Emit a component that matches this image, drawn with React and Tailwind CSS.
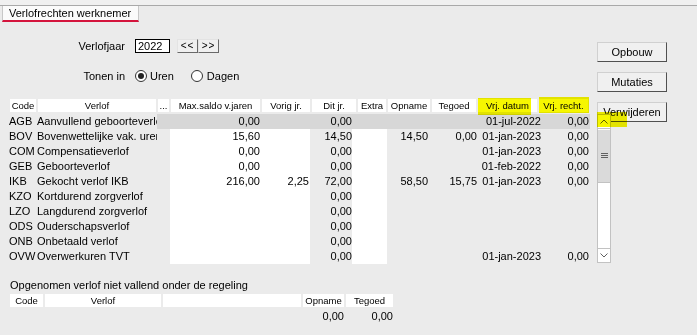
import React from 'react';

const HEAD = [
  { label: 'Code', w: 'w-[26px]' },
  { label: 'Verlof', w: 'w-[118px]' },
  { label: '...', w: 'w-[11px]' },
  { label: 'Max.saldo v.jaren', w: 'w-[89px]' },
  { label: 'Vorig jr.', w: 'w-[48px]' },
  { label: 'Dit jr.', w: 'w-[44px]' },
  { label: 'Extra', w: 'w-[28px]' },
  { label: 'Opname', w: 'w-[42px]' },
  { label: 'Tegoed', w: 'w-[44px]' },
  { label: 'Vrj. datum', w: 'w-[59px]' },
  { label: 'Vrj. recht.', w: 'w-[49px]' },
];

// breedte, uitlijning en achtergrond per datakolom
const COLS = [
  { w: 'w-[28px]', cls: 'text-left' },
  { w: 'w-[120px]', cls: 'text-left' },
  { w: 'w-[13px]', cls: '' },
  { w: 'w-[91px]', cls: 'text-right pr-px', white: true },
  { w: 'w-[49px]', cls: 'text-right pr-px', white: true },
  { w: 'w-[42px]', cls: 'text-right' },
  { w: 'w-[35px]', cls: 'text-right', white: true },
  { w: 'w-[42px]', cls: 'text-right pr-px' },
  { w: 'w-[49px]', cls: 'text-right pr-px' },
  { w: 'w-[64px]', cls: 'text-right pr-px' },
  { w: 'w-[48px]', cls: 'text-right pr-px' },
];

const ROWS = [
  ['AGB', 'Aanvullend geboorteverlof', '', '0,00', '', '0,00', '', '', '', '01-jul-2022', '0,00'],
  ['BOV', 'Bovenwettelijke vak. uren', '', '15,60', '', '14,50', '', '14,50', '0,00', '01-jan-2023', '0,00'],
  ['COM', 'Compensatieverlof', '', '0,00', '', '0,00', '', '', '', '01-jan-2023', '0,00'],
  ['GEB', 'Geboorteverlof', '', '0,00', '', '0,00', '', '', '', '01-feb-2022', '0,00'],
  ['IKB', 'Gekocht verlof IKB', '', '216,00', '2,25', '72,00', '', '58,50', '15,75', '01-jan-2023', '0,00'],
  ['KZO', 'Kortdurend zorgverlof', '', '', '', '0,00', '', '', '', '', ''],
  ['LZO', 'Langdurend zorgverlof', '', '', '', '0,00', '', '', '', '', ''],
  ['ODS', 'Ouderschapsverlof', '', '', '', '0,00', '', '', '', '', ''],
  ['ONB', 'Onbetaald verlof', '', '', '', '0,00', '', '', '', '', ''],
  ['OVW', 'Overwerkuren TVT', '', '', '', '0,00', '', '', '', '01-jan-2023', '0,00'],
];

export default function App() {
  return (
    <div className="relative w-[697px] h-[335px] overflow-hidden bg-[#ebebeb] text-black text-[11px] leading-none font-['Liberation_Sans',Arial,sans-serif]">
      <div className="h-[6px] bg-[#f0f0f0] border-b border-[#a9a9a9]" />
      <div className="ml-[2px] w-[137px] h-[16px] bg-[#fbfbfb] border-x border-[#c8c8c8] border-b-2 border-b-[#d4143c] flex items-center pl-[6px]">
        Verlofrechten werknemer
      </div>

      <div className="mt-[17px] flex items-center h-[14px]">
        <span className="w-[125px] text-right">Verlofjaar</span>
        <div className="ml-[10px] w-[35px] h-[14px] bg-white border border-black flex items-center pl-[2px]">2022</div>
        <div className="ml-[7px] flex">
          <SmallButton>&lt;&lt;</SmallButton>
          <SmallButton>&gt;&gt;</SmallButton>
        </div>
      </div>

      <div className="mt-[16px] flex items-center h-[14px]">
        <span className="w-[125px] text-right">Tonen in</span>
        <Radio checked className="ml-[10px]" />
        <span className="ml-[3px]">Uren</span>
        <Radio className="ml-[17px]" />
        <span className="ml-[4px]">Dagen</span>
      </div>

      <div className="mt-[16px] pl-[10px] flex gap-[2px] h-[13px]">
        {HEAD.map((h) => (
          <div key={h.label} className={`${h.w} bg-white text-center text-[9.5px] leading-[13px] whitespace-nowrap overflow-hidden`}>
            {h.label}
          </div>
        ))}
      </div>

      <div className="mt-[2px] flex">
        <div className="pl-[9px] w-[590px]">
          {ROWS.map((r, i) => (
            <div key={r[0]} className="flex h-[15px] leading-[15px]">
              {r.map((v, j) => {
                const c = COLS[j];
                const sel = i === 0 && j >= 2;
                const bg = sel ? 'bg-[#d7d7d7]' : c.white ? 'bg-white' : '';
                return (
                  <div key={j} className={`${c.w} ${c.cls} ${bg} shrink-0 whitespace-nowrap overflow-hidden`}>
                    {v}
                  </div>
                );
              })}
            </div>
          ))}
        </div>
        <Scrollbar />
      </div>

      <div className="mt-[15px] pl-[10px] h-[12px] leading-[12px]">Opgenomen verlof niet vallend onder de regeling</div>
      <div className="mt-[3px] pl-[10px] flex gap-[2px] h-[13px] text-[9.5px] leading-[13px] text-center">
        <div className="w-[33px] bg-white">Code</div>
        <div className="w-[116px] bg-white">Verlof</div>
        <div className="w-[138px] bg-white" />
        <div className="w-[41px] bg-white">Opname</div>
        <div className="w-[47px] bg-white">Tegoed</div>
      </div>
      <div className="mt-[3px] pl-[303px] flex gap-[2px] h-[12px] leading-[12px]">
        <div className="w-[41px] text-right">0,00</div>
        <div className="w-[47px] text-right">0,00</div>
      </div>

      <div className="absolute left-[597px] top-[42px] flex flex-col gap-[10px]">
        <FormButton>Opbouw</FormButton>
        <FormButton>Mutaties</FormButton>
        <FormButton>Verwijderen</FormButton>
      </div>

      {/* markeerstift */}
      <div className="absolute left-[478px] top-[98px] w-[53px] h-[17px] bg-[#f6f600] mix-blend-multiply z-20" />
      <div className="absolute left-[539px] top-[97px] w-[50px] h-[16px] bg-[#f6f600] mix-blend-multiply z-20" />
      <div className="absolute left-[597px] top-[112px] w-[30px] h-[15px] bg-[#f6f600] mix-blend-multiply z-20" />
    </div>
  );
}

function SmallButton({ children }) {
  return (
    <div className="w-[21px] h-[14px] bg-[#f0f0f0] border border-t-[#e3e3e3] border-l-[#e3e3e3] border-r-[#696969] border-b-[#696969] flex items-center justify-center text-[10px] tracking-[1px]">
      {children}
    </div>
  );
}

function FormButton({ children }) {
  return (
    <div className="w-[70px] h-[20px] bg-[#f0f0f0] border border-t-[#d0d0d0] border-l-[#d0d0d0] border-r-[#505050] border-b-[#505050] flex items-center justify-center">
      {children}
    </div>
  );
}

function Radio({ checked = false, className = '' }) {
  return (
    <div className={`${className} w-[12px] h-[12px] rounded-full border border-[#333] bg-white flex items-center justify-center`}>
      {checked && <div className="w-[6px] h-[6px] rounded-full bg-[#222]" />}
    </div>
  );
}

function Scrollbar() {
  return (
    <div className="relative z-10 ml-[7px] w-[14px] h-[149px] bg-white border border-[#c2c2c2] flex flex-col">
      <div className="h-[14px] border-b border-[#c2c2c2] flex items-center justify-center">
        <Chevron up />
      </div>
      <div className="mt-[1px] h-[53px] bg-[#dadada] border-b border-[#c2c2c2] flex items-center justify-center">
        <svg width="7" height="6" viewBox="0 0 7 6" aria-hidden="true">
          <path d="M0 0.5h7M0 2.5h7M0 4.5h7" stroke="#606060" strokeWidth="1" />
        </svg>
      </div>
      <div className="flex-1" />
      <div className="h-[14px] border-t border-[#c2c2c2] flex items-center justify-center">
        <Chevron />
      </div>
    </div>
  );
}

function Chevron({ up = false }) {
  return (
    <svg width="8" height="5" viewBox="0 0 8 5" fill="none" aria-hidden="true">
      <path d={up ? 'M0.5 4.5L4 1L7.5 4.5' : 'M0.5 0.5L4 4L7.5 0.5'} stroke="#606060" strokeWidth="1" />
    </svg>
  );
}
